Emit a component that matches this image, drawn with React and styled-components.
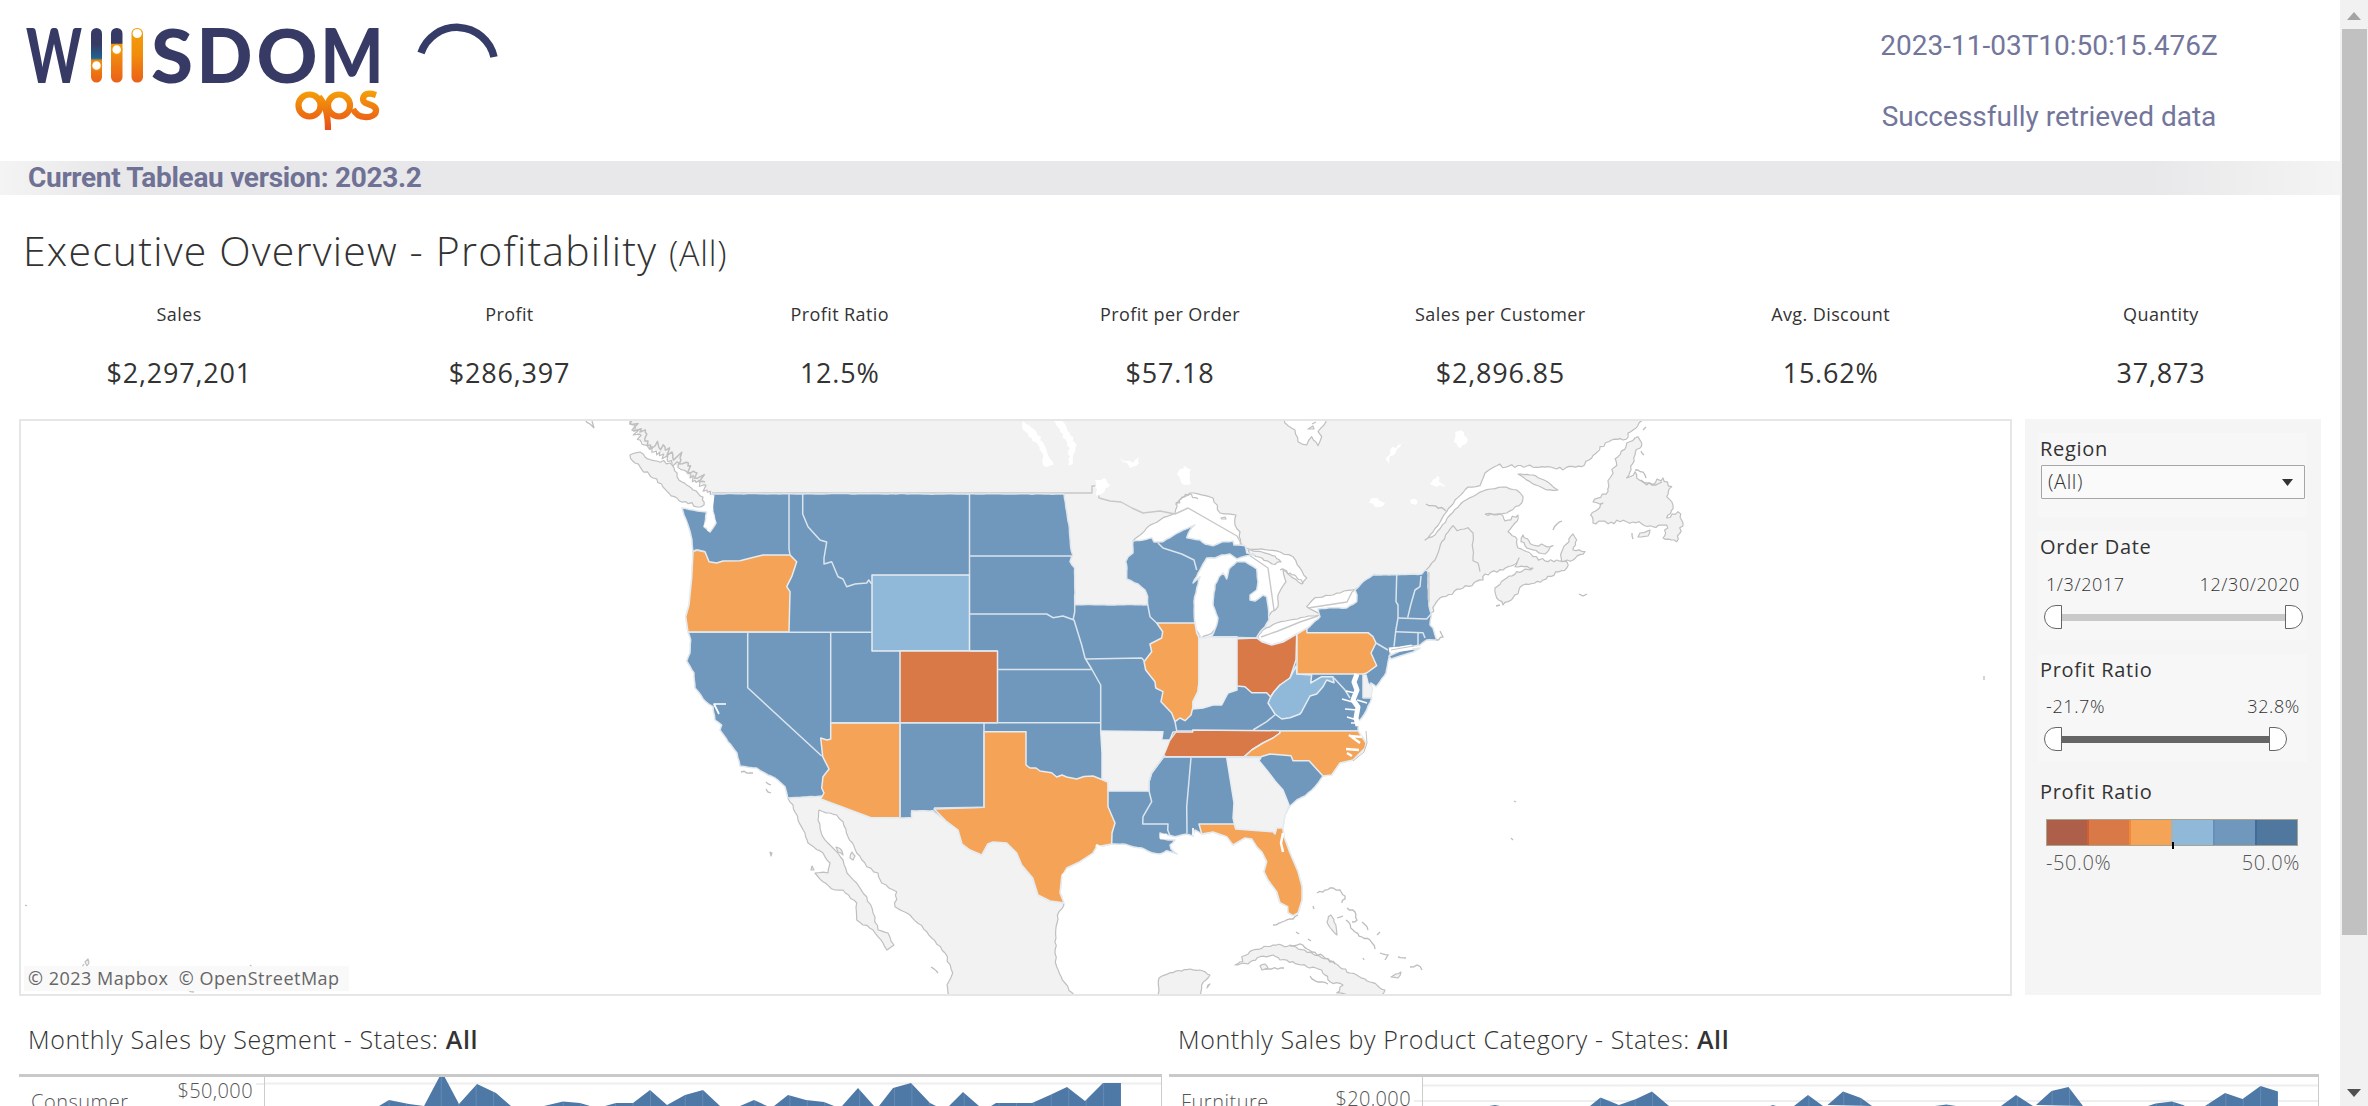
import React from 'react';
import styled, { createGlobalStyle } from 'styled-components';

const GlobalStyle = createGlobalStyle`
  * { box-sizing: border-box; }
  body { margin: 0; background: #fff; overflow: hidden; font-family: "Open Sans", "Noto Sans", sans-serif; color: #333; }
`;

const Page = styled.div`display: flex; width: 2368px; height: 1106px; overflow: hidden;`;
const Content = styled.main`width: 2340px; height: 1106px; overflow: hidden; display: flex; flex-direction: column;`;

const Header = styled.header`height: 161px; flex: none; display: flex; justify-content: space-between;`;
const LogoSvg = styled.svg`display: block; width: 520px; height: 161px;`;
const LogoLetter = styled.text`font-family: Lato, sans-serif; font-weight: 900; fill: #383a66;`;
const Status = styled.div`
  width: 400px; margin-right: 91px; padding-top: 10px;
  font: 400 28px/71px Roboto, sans-serif; color: #73769b; text-align: center; white-space: nowrap;
`;
const StatusLine = styled.div`letter-spacing: ${p => p.$ls || 0}px;`;
const Banner = styled.div`
  height: 34px; flex: none; padding-left: 28px; color: #6f7195;
  font: 700 28px/34px Roboto, sans-serif; letter-spacing: -0.3px; white-space: nowrap;
  background: linear-gradient(90deg, #f4f4f4 0, #e8e8ea 110px, #e8e8ea 2150px, #f4f4f4 100%);
`;

const Title = styled.h1`
  margin: 0; height: 110px; flex: none; padding-left: 23px;
  font-weight: 300; font-size: 41px; line-height: 110px; letter-spacing: 1.2px; white-space: nowrap; color: #333;
`;
const TitleScope = styled.span`font-size: 34px; letter-spacing: 0.8px;`;

const KpiRow = styled.section`display: grid; grid-template-columns: repeat(7, 330.3px); padding-left: 14px; height: 114px; flex: none;`;
const Kpi = styled.div`text-align: center; white-space: nowrap;`;
const KpiLabel = styled.div`font-size: 18px; line-height: 19px; letter-spacing: 0.4px;`;
const KpiValue = styled.div`margin-top: 20px; font-size: 27px; line-height: 58px; font-weight: 500; letter-spacing: 0.8px;`;

const MapRow = styled.section`display: flex; height: 577px; flex: none; padding-left: 19px; gap: 13px;`;
const MapPanel = styled.div`width: 1993px; height: 577px; border: 2px solid #e6e6e6; position: relative; overflow: hidden;`;
const MapSvg = styled.svg`display: block; width: 1989px; height: 573px;`;
const Attribution = styled.div`
  position: absolute; left: 3px; bottom: 3px; height: 25px; width: 325px; padding-left: 4px;
  background: rgba(248,248,248,.85); font-weight: 500; font-size: 18px; line-height: 25px; color: #666;
  letter-spacing: 0.5px; white-space: pre;
`;

const Filters = styled.aside`width: 296px; height: 576px; background: #f5f5f5; padding: 14px 14px 0 13px; display: flex; flex-direction: column;`;
const FilterCard = styled.div`
  height: ${p => p.$h}px; margin-bottom: ${p => p.$mb || 14}px; background: ${p => p.$plain ? 'transparent' : '#f7f7f7'};
`;
const FilterTitle = styled.div`
  font-size: 20px; font-weight: 500; line-height: 32px; letter-spacing: 0.7px; padding-left: 2px; color: #333; white-space: nowrap;
`;
const Select = styled.div`
  margin-left: 3px; width: 264px; height: 34px; border: 1px solid #a6a6a6; background: #fafafa; border-radius: 1px;
  display: flex; align-items: center; justify-content: space-between; padding: 0 11px 0 6px;
  font-size: 20px; font-weight: 300; line-height: 30px; letter-spacing: 0.6px;
`;
const RangeLabels = styled.div`
  display: flex; justify-content: space-between; padding: 0 7px 0 8px; margin-top: ${p => p.$mt || 0}px;
  font-size: ${p => p.$size || 18}px; line-height: 28px; letter-spacing: ${p => p.$ls || 0.6}px; font-weight: 300; color: ${p => p.$color || '#333'};
`;
const Slider = styled.div`display: flex; align-items: center; margin: 7px 0 0 6px; width: ${p => p.$w}px; height: 24px;`;
const Handle = styled.div`
  width: 18px; height: 24px; background: #fff; border: 1px solid #666;
  border-radius: ${p => p.$end ? '0 12px 12px 0' : '12px 0 0 12px'};
`;
const Track = styled.div`flex: 1; height: 7px; background: ${p => p.$color};`;
const Legend = styled.div`margin: 11px 0 0 8px; width: 252px; height: 27px; border: 1px solid #aaa38f; display: flex; position: relative;`;
const Swatch = styled.div`flex: 1; background: ${p => p.$c}; border-left: ${p => p.$edge ? `2px solid ${p.$edge}` : '0'};`;
const LegendTick = styled.div`position: absolute; left: 125px; top: 22px; width: 2px; height: 7px; background: #000;`;

const ChartRow = styled.section`display: flex; flex: none; padding-left: 19px; margin-top: 9px; height: 101px; gap: 7px;`;
const ChartPanel = styled.div`width: ${p => p.$w}px;`;
const ChartTitle = styled.h2`
  margin: 0; height: 69px; line-height: 69px; padding-left: 9px; font-size: 25px; font-weight: 300; letter-spacing: 0.6px; white-space: nowrap;
  b { font-weight: 600; }
`;
const ChartBody = styled.div`display: flex; height: 32px; border-top: 3px solid #c9c9c9; overflow: hidden;`;
const RowLabel = styled.div`width: ${p => p.$w}px; padding: 11px 0 0 12px; font-size: 20px; line-height: 28px; letter-spacing: 0.5px; font-weight: 300; color: #555;`;
const AxisLabel = styled.div`
  flex: 1; text-align: right; padding: ${p => p.$pt}px 11px 0 0; font-size: 20px; line-height: 28px; letter-spacing: 0.4px; font-weight: 300; color: #555;
  background: linear-gradient(#eee, #eee) right ${p => p.$grid}px / 8px 2px no-repeat;
`;
const Plot = styled.svg`display: block; height: 29px; width: ${p => p.$w}px; border-left: 1px solid #ccc; border-right: 1px solid #ccc;`;

const Scrollbar = styled.div`width: 28px; height: 1106px; background: #f1f1f1; display: flex; flex-direction: column; align-items: center;`;
const ScrollEnd = styled.div`height: 29px; display: flex; align-items: center; justify-content: center; padding-top: 3px;`;
const Thumb = styled.div`width: 25px; height: 906px; background: #c1c1c1;`;
const Spacer = styled.div`flex: 1;`;

/* ---------- map geometry ---------- */
const hash = (a, b) => {
  const s = Math.sin(a * 12.9898 + b * 78.233) * 43758.5453;
  return s - Math.floor(s) - 0.5;
};
const parse = s => s.trim().split(/\s+/).map(p => p.split(',').map(Number));
const shape = s => 'M' + s.trim().split(/\s+/).join('L') + 'Z';
const line = s => 'M' + s.trim().split(/\s+/).join('L');
// Adds small inlets along a shoreline; a higher amp gives a more broken coast.
const coast = (s, amp = 1.4, step = 4, closed = true) => {
  const pts = parse(s);
  const out = [];
  const n = closed ? pts.length : pts.length - 1;
  for (let i = 0; i < n; i++) {
    const [x1, y1] = pts[i];
    const [x2, y2] = pts[(i + 1) % pts.length];
    const len = Math.hypot(x2 - x1, y2 - y1);
    const k = Math.max(1, Math.round(len / step));
    for (let j = 0; j < k; j++) {
      const t = j / k;
      const o = j === 0 ? 0 : hash(x1 + j, y1 - j) * 2 * amp;
      out.push([(x1 + (x2 - x1) * t - ((y2 - y1) / len) * o).toFixed(1), (y1 + (y2 - y1) * t + ((x2 - x1) / len) * o).toFixed(1)]);
    }
  }
  if (!closed) out.push(pts[pts.length - 1]);
  return 'M' + out.map(p => p.join(',')).join('L') + (closed ? 'Z' : '');
};

const BC_COAST = '628,415 630,423 635,430 640,440 648,447 660,452 672,463 683,470 690,478 700,483 707,490 712,495';
const CANADA = `${BC_COAST} 713,505 800,600 1050,700 1080,640 1180,640 1260,660 1320,640 1400,600 1431,613 1440,598 1463,588 1483,580 1485,574 1503,570 1511,566 1519,558 1515,566.7 1533,568 1516.7,571.7 1506.7,578 1495,588 1496.7,598 1503,605 1513,598 1523,585 1543,580 1566.7,568 1567,562 1556.7,560 1548,561.7 1533,556.7 1518,548 1515,536.7 1508,531.7 1515,523 1518,515 1505,521 1500,514 1485,514`;
const GASPE = '1485,514 1506.7,513 1521.7,503 1523,496.7 1516.7,490 1503,487 1483,491 1463,501.7 1450,515 1435,535 1425,540 1433,532 1446.7,511.7 1455,500 1468,487 1480,485.7 1485,473 1496.7,465.7';
const LABRADOR = '1496.7,465.7 1526.7,466 1556.7,469 1581.7,466.7 1591.7,458 1600,446.7 1611.7,440 1623,440 1633,430 1641.7,420.7 1640,415';

const US = `711.7,493.7 1064,494 1066.7,511.7 1069,525 1070.7,548 1072.7,555 1070,561.7 1074.7,568 1074.7,604.7 1147.7,604.7 1147.7,596.7 1145,590 1138,584 1126.7,579 1127,568 1125.7,561.7 1128,557 1133,553 1133,541 1143,540 1151.7,537.7 1154,542 1163,541.7 1173,535.7 1183,530 1195,525 1190,530 1186.7,537.7 1200,540 1205,544 1213,545.7 1221.7,542 1233,541 1234,545 1245,545.7 1246.7,553 1255,555 1246,556 1237,559 1230,554 1221.7,555 1215,558 1206.7,558 1201.7,566.7 1193,583 1200,576.7 1196.7,588 1194,601.7 1194.7,621.7 1196.7,633 1201.7,638 1211.7,636.7 1216.7,625 1218,618 1213,605 1215,585 1219,576.7 1223,573 1226.7,579 1229,569 1236.7,561.7 1245,561.7 1256.7,569 1258,581.7 1256.7,590 1250,595 1250,600 1255,601 1263,595 1266.7,596.7 1268.7,611.7 1269,620 1265,626.7 1260,632 1257,636.7 1261.7,641.7 1271.7,645 1283,641.7 1295,635 1306.7,629 1320,616.7 1318,609 1333,607.7 1346.7,608 1356.7,601.7 1357,595 1355,590 1363,581.7 1373,575 1421.7,574 1425,570 1427.7,571 1429,606 1431.5,615 1430,625 1433,628 1435,635 1436.7,640 1426.7,640 1420,645 1406.7,646.7 1391,650 1389,658 1388,662 1386,673 1380,681.7 1376,686.7 1370.7,683 1371.7,698 1366.7,710 1361.7,718 1358,722 1358,730.7 1366,743 1365,748 1353,760 1340,763 1331.7,775 1323,776 1315,786.7 1305,796 1296.7,800 1290,806 1285,815 1282.7,828 1284,836.7 1290,853 1298,871.7 1302,886.7 1302,900 1298,913 1293,915.7 1288,912.7 1287.7,906.7 1280,902.7 1276.7,891.7 1268,880 1264,871.7 1266.7,861.7 1261.7,851.7 1256.7,846.7 1251.7,839 1245,838 1233,845 1226.7,836.7 1213,832 1201.7,834 1195,830 1193,836 1186.7,834 1175,836.7 1160,833 1160,838 1168,840 1175,840 1170,845 1171,849 1177,854 1166.7,850.7 1160,854 1151.7,852.7 1141.7,848 1133,846.7 1123,844 1111.7,844 1096.7,846.7 1093,853 1080,861.7 1066.7,868 1061.7,876.7 1060,893 1064,903 1058,902 1050,901 1038,895 1032.7,878 1021.7,865 1016.7,853 1006.7,843 993,842 987.7,844 981.7,855 970,850 962,844 958,830 946.7,821.7 933,810.7 911.7,810.7 911.7,817.7 871,817.7 820.7,799 823,796 787.7,798 785,786.7 775,778 768,775 756.7,768 740,766 737,753 728,741.7 720,730 721.7,725 715,720 713,706.7 705.7,701.7 695,688 694,673 686.7,661 690,653 690.7,640 688,632 685.7,616.7 689,605 691.7,578 693,551.7 692,540 689,528 684,515 682,508 693,510 706.7,512 704,526.7 710,532 716,523 713,511.7`;

const STATES = [
  ['#f5a357', '693,551.7 696,550 705,551.7 709,561.7 716.7,563 723,561 740,560.7 751.7,557.7 763,555 790,555 796.7,561.7 791.7,576.7 786.7,586.7 790,591.7 789,632 688,632 685.7,616.7 689,605 691.7,578'],
  ['#90b9d9', '872,575 969.5,575 969.5,651 872,651'],
  ['#d97948', '900,651 997.5,651 997.5,722.7 900,722.7'],
  ['#f5a357', '830.7,723 830.7,739 827,740 820.7,738 822.7,756.7 829,769 823,776.7 821.7,788 824,793 820.7,799 871,817.7 900,817.7 900,723'],
  ['#f5a357', '984,731.7 1026,731.7 1026,765 1030,768 1036,768 1040,771 1051.7,772.7 1056.7,777 1062,775 1066.7,777 1076.7,779 1084,776.5 1093,776 1103,780 1108,782 1108,806.7 1115,823 1112,833 1111.7,844 1096.7,846.7 1093,853 1080,861.7 1066.7,868 1061.7,876.7 1060,893 1064,903 1058,902 1050,901 1038,895 1032.7,878 1021.7,865 1016.7,853 1006.7,843 993,842 987.7,844 981.7,855 970,850 962,844 958,830 946.7,821.7 934,809 984,807.3'],
  ['#f2f2f2', '1100.7,731 1163,731.7 1161.7,740 1170,740 1165,755 1160,761.7 1151.7,773 1149,781.7 1149,791 1108.5,791 1108,782 1102,779 1102,753'],
  ['#f5a357', '1156.7,623 1195,623 1196.7,633 1199,638 1199,681.7 1198,691.7 1193,701.7 1193,706.7 1191,715 1185,720.7 1180,718 1175,721.7 1171.7,713 1161,701.7 1163,691.7 1155.7,688 1155,681.7 1145.7,670 1144,661.7 1151.7,651.7 1150,644 1161.7,638 1162.7,631.7'],
  ['#f2f2f2', '1199,638 1205,638 1211.7,636.7 1237,636.7 1237,690 1228,693 1221.7,705 1213,705 1203,708 1193,709 1193,701.7 1198,691.7 1199,681.7'],
  ['#d97948', '1237,638.7 1256.7,638 1261.7,641.7 1271.7,645 1283,642 1296.7,634 1296,660 1290,678 1280,685 1274,691.7 1270.7,697 1266.7,692.7 1251.7,692.7 1245,686.7 1237,686'],
  ['#90b9d9', '1296,666 1297,674 1311.7,675 1310.7,683 1321.7,676.7 1333,676.7 1334,682.7 1326.7,680 1323,686.7 1316.7,694 1310,696 1301.7,711.7 1300,714 1290,717.7 1281.7,719 1275,714 1268,703 1270.7,697 1274,691.7 1280,685 1290,678'],
  ['#f5a357', '1297,634 1306.7,628 1307,632.7 1368,632.7 1373,636.7 1376,643 1371,653 1376.7,665.7 1366.7,673 1363,674 1297,674'],
  ['#f2f2f2', '1363,675 1366,675 1368,683 1372.7,688 1370.7,697.7 1363,697.7'],
  ['#d97948', '1173,732 1192.7,732 1192.7,730 1280,730.7 1280,733 1273,738 1263,743 1251.7,750 1244,756.7 1163,756.7 1166.7,748'],
  ['#f5a357', '1280,730.7 1358,730.7 1366,743 1365,748 1353,760 1340,763 1331.7,775 1323,776 1309,760.7 1293,760.7 1291,755.7 1270,754 1260,757 1244,757 1251.7,750 1263,743 1273,738 1280,733'],
  ['#f2f2f2', '1226.7,757.7 1261,757.7 1259,760.7 1268,771.7 1275,781 1283,790 1289,805 1285,815 1282.7,828 1276.7,828 1275,834 1273,831.7 1235.7,829 1233,818 1234,803'],
  ['#f5a357', '1199,824 1234.3,824 1235.7,829 1273,831.7 1275,834 1276.7,828 1282.7,828 1284,836.7 1290,853 1298,871.7 1302,886.7 1302,900 1298,913 1293,915.7 1288,912.7 1287.7,906.7 1280,902.7 1276.7,891.7 1268,880 1264,871.7 1266.7,861.7 1261.7,851.7 1256.7,846.7 1251.7,839 1245,838 1233,845 1226.7,836.7 1213,832 1201.7,834'],
];

const BORDERS = [
  '705,551.7 698,550 692,551.7', '789,494 789,549 790,555',
  '802.7,494 802.7,514 808,526.7 820,540 826.7,542 824,558 824,564 831.7,561.7 838,576.7 843,579 846.7,586.7 855,584 866.7,583 868.7,580 871.7,584',
  '969.5,494 969.5,575', '969.5,556 1073,556', '969.5,614 1046.7,614 1053,617.7 1063,616 1074,620 1081.7,645 1085,658 1091.7,669 1096.7,678 1100.7,685 1100.7,731',
  '1074.7,604.7 1074.7,612 1073,620', '969.5,651 997.5,651', '997.5,669.5 1091.7,669.5', '688,632.3 872,632.3', '747.7,632 747.7,687.7 821.7,756',
  '830.7,632 830.7,724', '830.7,722.7 1100.7,722.7', '900,722 900,818', '984,722.7 984,807.3 934,808',
  '1086,659 1141.7,658 1145,661.7', '1147.7,604.7 1150,616.7 1156.7,623',
  '1158,543 1163,548 1181.7,554 1194,560 1196.7,570', '1211.7,636.7 1257,638',
  '1191,757.7 1186.7,806.7 1187,833', '1165,755 1160,761.7 1151.7,773 1149,781.7 1149,791 1151.7,801.7 1143,816.7 1142.7,824 1168,824 1167.7,830 1170,835.7',
  '1175,721.7 1176.7,730.7 1170,740', '1176,731 1192,731', '1253,730 1266.7,721.7 1276,714', '1163,757 1261,757', '1280,730.7 1358,730.7',
  '1334,678 1345,690 1350,698', '1363,697.7 1371,697.7', '1376,643 1388,650',
  '1396.7,575 1396,601.7 1398,605 1398,618 1395.7,631 1394,646.7', '1398,618 1426.7,619 1431,614', '1395.7,631.7 1423,632.7 1425,638', '1418,632 1418,645',
  '1421,576 1420,586.7 1415,590 1410.7,605 1407.7,617.7',
];

const MEXICO = '787.7,798 793,805 798,820 805,833 808,843 823,853 830,863 828,873 815,873 823,881.7 835,890 843,890 856.7,903 856.7,920 873,930 883,943 887,950 894,945 888,933 878,930 873,913 866.7,896.7 856.7,883 847,873 843,860 833,848 822.7,836.7 818,820 819,810 830,813 836.7,815 843,821.7 848,836.7 856.7,853 866.7,866.7 878,873 881.7,883 896.7,891.7 895,906.7 910,915 926.7,931.7 945,953 952.7,973 947,985 949,1000 1077,1000 1065,983 1056.7,966.7 1055,953 1057,923 1059,911.7 1064,905 1058,895 980,800 820,790';

const ISLANDS = [
  ['630,455 640,452 645,457 657,461 670,463 677,473 682,482 693,490 703,497 704,505 697,507 677,498 663,487 653,478 642,470 635,463', 2],
  ['1638,436.7 1641.7,443 1635,455 1626.7,478 1635,471.7 1636.7,478 1646.7,485 1663,478 1671.7,486.7 1666.7,496.7 1673,505 1666.7,518 1678,511.7 1683,523 1676.7,541.7 1663,538 1666.7,525 1653,526.7 1633,522 1620,521.7 1593,523 1590.7,515 1603,503 1593,502 1608,491.7 1610,478 1618,456.7 1626.7,443', 2],
  ['1518,474 1533,475 1546,481 1558,490 1546.7,490 1531.7,483', 0.4],
  ['1523,535 1533,545 1553,545.7 1545,554 1530,549 1521,541.7', 1.5],
  ['1573,534 1576.7,540 1573,550 1585,551.7 1573,560 1561.7,561.7 1561.7,551.7', 1.2],
  ['1640,533 1650,530 1648,536 1638,537', 1],
  ['1158,1000 1159,978 1170,972.7 1190,969 1203,971 1210,975 1201.7,985 1199,1000', 0.7],
  ['1235,965 1242.7,961.7 1241.7,956.7 1253,950 1273,945 1293,946 1313,954 1333,961.7 1350,973 1365,979 1385,990 1376.7,1000 1336.7,993 1343,985 1330,981.7 1321.7,970 1306.7,966.7 1293,961.7 1280,960 1273,955 1260,956.7 1248,964', 1.2],
  ['1260,966 1265,964 1268,968 1262,970', 0.6], ['1331,915 1334,922 1337,935 1332,930 1327,922', 2], ['1208,985 1210,984 1207,988', 0.2],
  ['836,847 842,851 843,855 838,852', 1], ['852,852 855,856 853,860 850,858', 1], ['1391,977 1401,972 1398,978', 0.8],
  ['85,962 88,959 89,963 87,966', 0.3], ['770,852 772,853 771,856', 0.3], ['812,866 814,870 811,870', 0.3],
];

const FRAGMENTS = [
  '585,419 590,424 594,428 592,421', '1317,893 1325,890 1333,888 1340,890 1345,896 1342,903', '1347,908 1355,912 1357,920 1352,922', '1346,920 1353,930 1362,937 1370,940 1375,949',
  '1362,922 1368,930', '1380,953 1388,955 1385,960', '1398,957 1406,958', '1410,967 1417,965 1422,970', '1337,918 1343,916', '1313,906 1314,909', '1273,925 1282,922 1293,919 1298,915',
  '1310,976 1318,982 1328,984', '1290,946 1300,944 1312,952 1323,956 1335,964', '1265,969 1284,968', '741,772 753,773', '766,782 771,785', '766,789 771,793', '931,967 938,973', '1553,530 1557,524 1562,521', '1579,594 1583,596 1587,594',
  '1643,430 1646,427', '1641,451 1644,455', '1632,533 1633,539', '1635,470 1643,472 1646,478', '1641,480 1652,485 1662,482', '1511,838 1513,840', '1426,504 1436,506 1446,511', '1436,640 1443,637 1440,631', '82,967 84,964', '245,0',
  '1984,676 1984,680', '1377,935 1380,932', '1363,958 1364,960', '1296,932 1299,934', '1308,939 1311,941', '250,965 252,967', '1496,606 1500,605', '188,990 194,992', '25,905 27,906', '1514,801 1516,802',
];

const LAKES = [
  ['1133,541 1146.7,528 1160,520 1175,513 1176.7,503 1190,493 1213,498 1220,513 1236,515 1235,525 1240,531.7 1240,545 1240,560 1150,560', 1],
  ['1201,638 1190,620 1190,580 1205,555 1246,548 1280,552 1293,556.7 1300,568 1306.7,578 1301.7,584 1283,570 1286,581.7 1278,595 1278,606.7 1271.7,611.7 1265,625 1235,600 1225,625', 1],
  ['1258,636 1263,630 1276.7,623 1290,620 1305,617 1319,615 1322,618 1310,640 1283,655 1262,650', 0.5],
  ['1306.7,606.7 1315,597.7 1333,595 1344,591 1357,589 1362,595 1357,610 1318,613', 0.8],
];
const SMALL_LAKES = [
  '1021.7,415 1026,424 1036.7,432 1043,442 1048,455 1053,465 1045,467 1041.7,452 1031.7,438 1023,430', '1050,415 1060,420 1066.7,428 1076.7,445 1073,463 1068,465 1070,448 1060,432',
  '1120,457 1126,461 1133,463 1140,457 1136,466 1130,468', '1177,474 1184,466 1191,469 1191,484 1184,485', '1095,480 1104,478 1110,485 1103,493 1097,496 1095,487',
  '1386,460 1390,450 1404,442 1396,451 1390,456 1388,465', '1366,503 1374,498 1385,503 1378,507', '1410,500 1416,499 1416,505 1411,504', '1430,484 1437,476 1441,483 1446,486 1434,486',
  '1455,432 1461,430 1468,440 1461,448 1454,442',
];

const Map = () => (
  <MapSvg viewBox="21 421 1989 573">
    <g stroke="#bfbfbf" strokeWidth="1.2" fill="#f2f2f2" strokeLinejoin="round">
      <path stroke="none" d={shape(`${CANADA} ${GASPE} ${LABRADOR}`)} />
      <path fill="none" d={coast(BC_COAST, 4, 2, false)} />
      <path fill="none" strokeWidth="1.5" d={coast('632,420 640,432 648,441 655,446 665,447 672,452 680,458 688,466 697,473 705,482', 6, 2, false)} />
      <path fill="none" d={coast(CANADA.split(' ').slice(20).join(' '), 1.6, 3, false)} />
      <path fill="none" d={coast(GASPE, 0.7, 4, false)} />
      <path fill="none" d={coast(LABRADOR, 1.8, 3, false)} />
      <path d={coast(MEXICO, 1, 4)} />
      {ISLANDS.map(([d, a]) => <path key={d} d={coast(d, a, 3)} />)}
      <path fill="#fff" d={coast('1281.7,415 1285,423 1295,430 1298,441.7 1306.7,445 1311.7,436.7 1318,445.7 1321.7,436.7 1318,431.7 1324,425 1328,415', 0.8, 4)} />
      <path d="M1308,429l5,-3l1,3zM1312,424l4,-2" />
      {LAKES.map(([d, a]) => <path key={d} fill="#fff" d={coast(d, a, 4)} />)}
      <path d={coast('1248,550 1262,552 1275,556 1281,562 1272,564 1262,558 1250,554', 1, 3)} />
      <path d={coast('1280,570 1290,573 1297,578 1303,584', 2, 2, false)} fill="none" />
      <path fill="none" d={coast('1176,505 1182,497 1190,494 1198,499', 2, 2, false)} />
      <path fill="none" stroke="#c8c8c8" strokeWidth="1.4" d="M712,493H1092V486H1097L1099,498L1110,501L1121,502L1132,508L1143,513L1160,511L1175,514L1188,508L1237,536L1242,545M1246,553L1268,568L1274,610M1261,637L1278,631L1300,622L1318,616M1308,608L1347,602L1352,592L1375,574" />
      <path fill="none" d={coast('1426,570 1435,560 1441.7,541.7 1453,525.7 1457,530.7 1468,527.7 1473,533 1473,560.7 1478,563 1480,571.7', 0.8, 4, false)} />
      <path fill="none" d="M1221,518l4,-1l1,2l-4,0z" />
    </g>
    <g fill="#fff">{SMALL_LAKES.map(d => <path key={d} d={coast(d, 1.6, 3)} />)}</g>
    <g stroke="#dfe6ec" strokeWidth="1.5" strokeLinejoin="round">
      <path fill="#7097bc" d={coast(US, 0.35, 4)} />
      <path fill="#7097bc" d="M1389,656L1400,651L1420,648L1413,652L1400,656L1391,659Z" />
      {STATES.map(([c, d]) => <path key={d} fill={c} stroke="#e6edf2" d={shape(d)} />)}
      {BORDERS.map(d => <path key={d} fill="none" stroke="#dbe5ee" d={line(d)} />)}
    </g>
    <g fill="none" stroke="#fff" strokeLinejoin="round">
      <path strokeWidth="5" d="M1357,674L1354,682L1357,690L1353,700L1358,707L1356,718L1358,726" />
      <path strokeWidth="1.6" d="M1355,693L1346,691M1356,703L1342,699M1357,710L1345,709M1357,720L1347,717M1358,723L1351,723M1357,700L1367,703" />
      <path strokeWidth="2.5" d="M1362,737L1350,736M1360,743L1349,735M1359,750L1346,749M1352,756L1347,753M1283,833L1281,843L1283,852" />
      <path strokeWidth="3" d="M713,495L711,512L714,522L708,531M705,527L711,514" />
      <path strokeWidth="1.7" d="M726,704H714L719,714M1193,835V828" />
      <path strokeWidth="5" d="M1160,837L1167,836M1389,650L1400,649L1412,647" />
      <path strokeWidth="3" d="M1096,845L1102,849M1062,876L1070,871" />
    </g>
    <g fill="none" stroke="#bdbdbd" strokeWidth="1.3">
      {FRAGMENTS.filter(d => d.includes(' ')).map(d => <path key={d} d={coast(d, 1.2, 3, false)} />)}
      <path strokeWidth=".9" d="M1366,731L1367,743L1364,752L1353,761M1391,650L1402,648L1414,646M1429,572V602" />
    </g>
  </MapSvg>
);

const Logo = () => (
  <LogoSvg viewBox="0 0 520 161">
    <defs>
      <linearGradient id="bar1" x1="0" y1="0" x2="0" y2="1"><stop offset=".3" stopColor="#383a66" /><stop offset=".55" stopColor="#1f6391" /><stop offset=".6" stopColor="#f08a10" /><stop offset="1" stopColor="#ea6018" /></linearGradient>
      <linearGradient id="bar2" x1="0" y1="0" x2="0" y2="1"><stop offset=".28" stopColor="#383a66" /><stop offset=".3" stopColor="#f39a0c" /><stop offset="1" stopColor="#ea6018" /></linearGradient>
      <linearGradient id="bar3" x1="0" y1="0" x2="0" y2="1"><stop offset="0" stopColor="#f4a008" /><stop offset=".5" stopColor="#f28c0c" /><stop offset="1" stopColor="#ea6018" /></linearGradient>
      <linearGradient id="ops" gradientUnits="userSpaceOnUse" x1="0" y1="91" x2="0" y2="130"><stop offset="0" stopColor="#f4a008" /><stop offset="1" stopColor="#e84e1a" /></linearGradient>
    </defs>
    <LogoLetter x="26" y="82.5" fontSize="76" textLength="56" lengthAdjust="spacingAndGlyphs">W</LogoLetter>
    <rect x="91" y="28" width="11" height="54.5" rx="5.5" fill="url(#bar1)" />
    <rect x="111" y="28" width="11.5" height="54.5" rx="5.5" fill="url(#bar2)" />
    <rect x="131.500" y="28" width="11.500" height="54.5" rx="5.5" fill="url(#bar3)" />
    <circle cx="96.500" cy="65.500" r="5" fill="#fff" stroke="#f08a10" strokeWidth="1.500" />
    <circle cx="116.700" cy="49.500" r="5" fill="#fff" stroke="#f39a0c" strokeWidth="1.500" />
    <circle cx="137.200" cy="33.500" r="4.600" fill="#fff" />
    <LogoLetter x="151" y="82.500" fontSize="75" textLength="42" lengthAdjust="spacingAndGlyphs">S</LogoLetter>
    <LogoLetter x="196.500" y="82.500" fontSize="76" textLength="56" lengthAdjust="spacingAndGlyphs">D</LogoLetter>
    <LogoLetter x="256.500" y="82.500" fontSize="75" textLength="61" lengthAdjust="spacingAndGlyphs">O</LogoLetter>
    <LogoLetter x="320.500" y="82.500" fontSize="76" textLength="63" lengthAdjust="spacingAndGlyphs">M</LogoLetter>
    <g fill="none" stroke="url(#ops)" strokeWidth="6.200">
      <circle cx="309.500" cy="105.500" r="11" />
      <circle cx="339" cy="105.500" r="11" />
      <path d="M319,97Q328,106 328,130" />
      <path d="M376,95Q364,91 363,99C363,106 377,103 376,111C375,119 358,120 353,109" />
    </g>
    <path d="M421,53A38,38 0 0 1 494,57" fill="none" stroke="#353c68" strokeWidth="7.500" />
  </LogoSvg>
);

const KPIS = [
  ['Sales', '$2,297,201'], ['Profit', '$286,397'], ['Profit Ratio', '12.5%'], ['Profit per Order', '$57.18'],
  ['Sales per Customer', '$2,896.85'], ['Avg. Discount', '15.62%'], ['Quantity', '37,873'],
];
const SWATCHES = [['#ad5f49'], ['#d97948', '#d0602f'], ['#f5a357', '#f0893a'], ['#90b9d9', '#a3b3b8'], ['#7097bc', '#6490bb'], ['#50779e', '#3f6c99']];

const SEG_AREA = 'M380,1106L390,1100L410,1104L425,1106L443,1072L460,1104L478,1084L497,1093L512,1106ZM545,1106L564,1101.500L581,1103L591,1106ZM606,1106L617,1103H634L651,1090L668,1105L686,1095L704,1090L721,1106ZM741,1106L755,1100L768,1106ZM775,1106L789,1095L807,1100L825,1102L835,1106ZM843,1106L859,1088L875,1106ZM880,1106L894,1088L912,1083L931,1103L937,1106ZM950,1106L964,1092L980,1106ZM992,1106L997,1103H1033L1051,1095L1068,1087L1086,1101L1104,1083H1122V1106Z';
const CAT_AREA = 'M1489,1106L1495,1105L1500,1106ZM1590,1106L1600.500,1097.500L1619,1105L1636,1099L1652,1091.500L1669,1106ZM1770,1106L1773,1105L1776,1106ZM1794,1106L1808,1095L1823,1106ZM1827.500,1105L1843,1091.500L1861,1098L1872,1106ZM1935,1106L1946.500,1104.500L1956,1106ZM2001,1106L2016,1095L2033,1106ZM2036,1105L2051.500,1091L2068.500,1087L2083,1106ZM2148,1106L2155.500,1103.500L2172,1101.500L2183,1105L2185,1106ZM2205,1106L2225,1093L2242.500,1099L2260.500,1086L2278,1091.500V1106Z';
const ticks = (a, step, n) => Array.from({ length: n }, (_, i) => `M${(a + i * step).toFixed(1)},1077V1106`).join('');

export default function App() {
  return (
    <Page>
      <GlobalStyle />
      <Content>
        <Header>
          <Logo />
          <Status>
            <StatusLine>2023-11-03T10:50:15.476Z</StatusLine>
            <StatusLine>Successfully retrieved data</StatusLine>
          </Status>
        </Header>
        <Banner>Current Tableau version: 2023.2</Banner>
        <Title>Executive Overview - Profitability <TitleScope>(All)</TitleScope></Title>
        <KpiRow>
          {KPIS.map(([l, v]) => <Kpi key={l}><KpiLabel>{l}</KpiLabel><KpiValue>{v}</KpiValue></Kpi>)}
        </KpiRow>
        <MapRow>
          <MapPanel><Map /><Attribution>{'© 2023 Mapbox  © OpenStreetMap'}</Attribution></MapPanel>
          <Filters>
            <FilterCard $h={84}>
              <FilterTitle>Region</FilterTitle>
              <Select>(All)<svg width="11" height="7"><path d="M0,0H11L5.500,7Z" fill="#333" /></svg></Select>
            </FilterCard>
            <FilterCard $h={109}>
              <FilterTitle>Order Date</FilterTitle>
              <RangeLabels $mt={7}><span>1/3/2017</span><span>12/30/2020</span></RangeLabels>
              <Slider $w={259}><Handle /><Track $color="#c9c9c9" /><Handle $end /></Slider>
            </FilterCard>
            <FilterCard $h={108}>
              <FilterTitle>Profit Ratio</FilterTitle>
              <RangeLabels $mt={6}><span>-21.7%</span><span>32.8%</span></RangeLabels>
              <Slider $w={243}><Handle /><Track $color="#666" /><Handle $end /></Slider>
            </FilterCard>
            <FilterCard $plain $h={120}>
              <FilterTitle>Profit Ratio</FilterTitle>
              <Legend>{SWATCHES.map(([c, e]) => <Swatch key={c} $c={c} $edge={e} />)}<LegendTick /></Legend>
              <RangeLabels $mt={3} $size={20} $color="#555"><span>-50.0%</span><span>50.0%</span></RangeLabels>
            </FilterCard>
          </Filters>
        </MapRow>
        <ChartRow>
          <ChartPanel $w={1143}>
            <ChartTitle>Monthly Sales by Segment - States: <b>All</b></ChartTitle>
            <ChartBody>
              <RowLabel $w={130}>Consumer</RowLabel><AxisLabel $pt={-0} $grid={6}>$50,000</AxisLabel>
              <Plot $w={898} viewBox="266 1077 896 29" preserveAspectRatio="none">
                <path d="M266,1083.500H1162" stroke="#eee" strokeWidth="2" />
                <path d={SEG_AREA} fill="#4e79a7" />
                <path d={ticks(390, 17.430, 43)} stroke="#fff" strokeOpacity=".13" />
              </Plot>
            </ChartBody>
          </ChartPanel>
          <ChartPanel $w={1150}>
            <ChartTitle>Monthly Sales by Product Category - States: <b>All</b></ChartTitle>
            <ChartBody>
              <RowLabel $w={130}>Furniture</RowLabel><AxisLabel $pt={8} $grid={23}>$20,000</AxisLabel>
              <Plot $w={897} viewBox="1423 1077 895 29" preserveAspectRatio="none">
                <path d="M1423,1085.500H2318M1423,1101H2318" stroke="#eee" strokeWidth="2" />
                <path d={CAT_AREA} fill="#4e79a7" />
                <path d={ticks(1600.500, 17.370, 40)} stroke="#fff" strokeOpacity=".13" />
              </Plot>
            </ChartBody>
          </ChartPanel>
        </ChartRow>
      </Content>
      <Scrollbar>
        <ScrollEnd><svg width="14" height="8"><path d="M0,8L7,0L14,8Z" fill="#a3a3a3" /></svg></ScrollEnd>
        <Thumb />
        <Spacer />
        <ScrollEnd><svg width="14" height="8"><path d="M0,0L7,8L14,0Z" fill="#505050" /></svg></ScrollEnd>
      </Scrollbar>
    </Page>
  );
}
